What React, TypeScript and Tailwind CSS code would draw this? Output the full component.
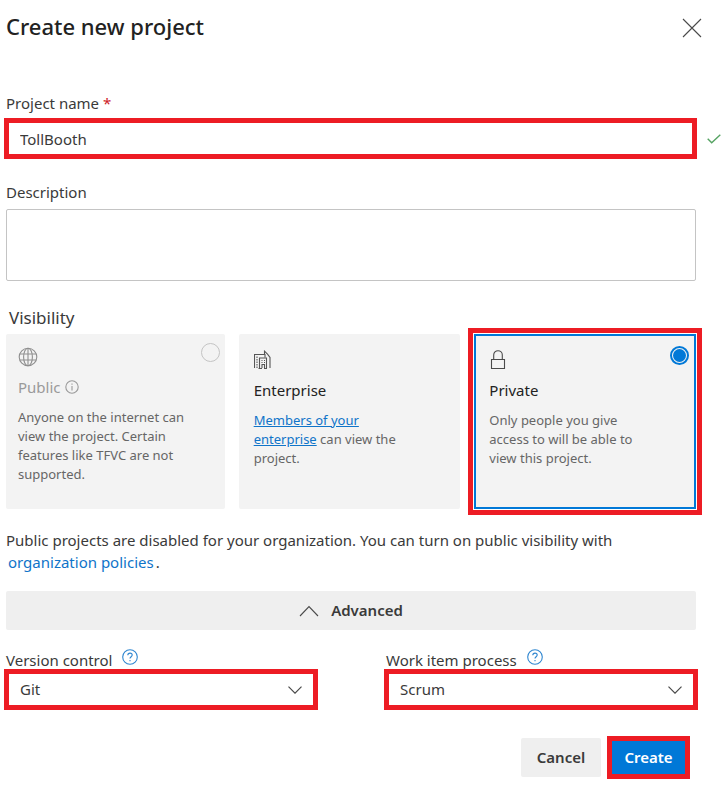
import { useState } from "react";
import type { ReactNode } from "react";

function CloseIcon() {
  return (
    <svg width="20" height="20" viewBox="0 0 20 20" fill="none" stroke="#4a4a4a" strokeWidth="1.1" aria-hidden="true">
      <path d="M1 1l18 18M19 1L1 19" />
    </svg>
  );
}

function CheckIcon() {
  return (
    <svg width="14" height="10" viewBox="0 0 14 10" fill="none" stroke="#55a362" strokeWidth="1.4" aria-hidden="true">
      <path d="M.7 4.7l4 4L13.3.8" />
    </svg>
  );
}

function GlobeIcon() {
  return (
    <svg width="20" height="20" viewBox="0 0 20 20" fill="none" stroke="#8f8f8f" strokeWidth="1.1" aria-hidden="true">
      <circle cx="10" cy="10" r="8.8" />
      <ellipse cx="10" cy="10" rx="4.4" ry="8.8" />
      <path d="M10 1.2v17.6M2 7h16M2 13h16" />
    </svg>
  );
}

function BuildingIcon() {
  return (
    <svg width="18" height="20" viewBox="1 0 18 20" fill="none" stroke="#555555" strokeWidth="1.1" aria-hidden="true">
      <path d="M1.500 18V4.500h10.500v3" />
      <path d="M11.500 4V1.200l3 3 2.500 3.300V18" />
      <path d="M6.500 18V8h7v10M9 18v-3.500h2.500V18" />
      <path d="M4 6.500V18" strokeDasharray="1.500 1" />
      <path d="M8.500 10.500h1M11 10.500h1M8.500 12.500h1M11 12.500h1" />
      <path d="M5.500 18.500h3.500M11 18.500h3" />
    </svg>
  );
}

function LockIcon() {
  return (
    <svg width="18" height="20" viewBox="-1 0 18 20" fill="none" stroke="#4a4a4a" strokeWidth="1.1" aria-hidden="true">
      <path d="M1.500 9.500h13v9H1.500z" />
      <path d="M3.700 9.500V5a4.300 4.300 0 018.600 0v4.500" />
    </svg>
  );
}

function InfoIcon() {
  return (
    <svg width="14" height="14" viewBox="0 0 14 14" fill="none" stroke="#9a9a9a" strokeWidth="1.1" aria-hidden="true">
      <circle cx="7" cy="7" r="6.200" />
      <path d="M7 6v4.500M7 3.600v1.200" />
    </svg>
  );
}

function HelpIcon() {
  return (
    <svg width="16" height="16" viewBox="0 0 16 16" fill="none" stroke="#2f86d0" strokeWidth="1.1" aria-hidden="true">
      <circle cx="8" cy="8" r="7.300" />
      <path d="M5.800 6.200c0-1.300 1-2.100 2.200-2.100s2.200.8 2.200 2c0 1.600-2.200 1.700-2.200 3.500M8 10.900v1.300" />
    </svg>
  );
}

function ChevronIcon({ up = false }: { up?: boolean }) {
  return up ? (
    <svg width="20" height="12" viewBox="0 0 20 12" fill="none" stroke="#4a4a4a" strokeWidth="1.100" aria-hidden="true">
      <path d="M1 11l9-9.500L19 11" />
    </svg>
  ) : (
    <svg width="14" height="8" viewBox="0 0 14 8" fill="none" stroke="#4a4a4a" strokeWidth="1.200" aria-hidden="true">
      <path d="M.500.700L7 7.200l6.500-6.500" />
    </svg>
  );
}

type CardProps = {
  value: string;
  title: string;
  icon: ReactNode;
  children: ReactNode;
  selected: boolean;
  onSelect: (value: string) => void;
};

function VisibilityCard({ value, title, icon, children, selected, onSelect }: CardProps) {
  return (
    <div
      className={
        selected
          ? "flex border-2 border-[#0078d7] bg-[#f3f3f3] py-3.5 pr-[5px] pl-[13px] outline-[5px] outline-offset-1 outline-[#ed1c24]"
          : "flex rounded-xs border-2 border-[#f3f3f3] bg-[#f3f3f3] py-3.5 pr-[5px] pl-[13px]"
      }
    >
      <div className="flex-1">
        {icon}
        <label htmlFor={value} className="mt-2 block text-[15px] leading-6 text-[#222222]">
          {title}
        </label>
        <p className="mt-[9px] pr-5 text-[13px] leading-[19px] text-[#666666]">{children}</p>
      </div>
      <input
        id={value}
        type="radio"
        name="visibility"
        checked={selected}
        onChange={() => onSelect(value)}
        className={
          selected
            ? "-mt-1 size-[19px] appearance-none rounded-full border-2 border-[#0078d7] bg-[#0078d7] bg-clip-content p-px"
            : "size-[19px] appearance-none"
        }
      />
    </div>
  );
}

function SelectField({ id, label, options }: { id: string; label: string; options: string[] }) {
  return (
    <div>
      <div className="ml-0.5 flex h-5 gap-2.5">
        <label htmlFor={id} className="text-[15px] leading-[22px]">
          {label}
        </label>
        <button type="button" aria-label={`Help for ${label}`} className="h-4">
          <HelpIcon />
        </button>
      </div>
      <div className="grid items-center">
        <select
          id={id}
          className="col-start-1 row-start-1 h-[41px] w-full appearance-none border-[5px] border-[#ed1c24] bg-white pl-[11px] text-[15px]"
        >
          {options.map((option) => (
            <option key={option}>{option}</option>
          ))}
        </select>
        <span className="pointer-events-none col-start-1 row-start-1 mr-4 justify-self-end">
          <ChevronIcon />
        </span>
      </div>
    </div>
  );
}

export default function App() {
  const [name, setName] = useState("TollBooth");
  const [visibility, setVisibility] = useState("private");

  return (
    <form
      onSubmit={(event) => event.preventDefault()}
      className="bg-white pr-[30px] pb-2 pl-1 font-['Noto_Sans','Open_Sans',sans-serif] text-[15px] text-[#3a3a3a]"
    >
      <header className="-mr-[5px] ml-0.5 flex items-center justify-between pt-3">
        <h1 className="pb-1 text-[22px] leading-7 font-medium text-[#222222]">Create new project</h1>
        <button type="button" aria-label="Close">
          <CloseIcon />
        </button>
      </header>

      <label htmlFor="project-name" className="mt-[47px] ml-0.5 block leading-6">
        Project name <span className="text-[#cd2026]">*</span>
      </label>
      <div className="-mr-6 mt-[3px] flex items-center gap-2.5">
        <input
          id="project-name"
          value={name}
          onChange={(event) => setName(event.target.value)}
          className="h-[41px] min-w-0 flex-1 border-[5px] border-[#ed1c24] pl-[11px]"
        />
        <CheckIcon />
      </div>

      <label htmlFor="description" className="mt-[21px] ml-0.5 block leading-6">
        Description
      </label>
      <div className="mt-[5px] mr-px ml-0.5 flex">
        <textarea id="description" className="h-[72px] flex-1 resize-none rounded-xs border border-[#c4c4c4] p-2" />
      </div>

      <fieldset className="mt-[25px] mr-px ml-0.5">
        <legend className="pl-[3px] text-[17px] leading-6">Visibility</legend>
        <div className="mt-1 grid h-[175px] grid-cols-[219fr_222fr_222fr] gap-3.5">
          <div className="flex rounded-xs bg-[#f3f3f3] py-[13px] pr-[5px] pl-3">
            <div className="flex-1">
              <GlobeIcon />
              <div className="mt-2 flex items-center gap-1">
                <label htmlFor="public" className="leading-6 text-[#9a9a9a]">
                  Public
                </label>
                <InfoIcon />
              </div>
              <p className="mt-[9px] text-[13px] leading-[19px] text-[#666666]">
                Anyone on the internet can view the project. Certain features like TFVC are not supported.
              </p>
            </div>
            <input
              id="public"
              type="radio"
              name="visibility"
              disabled
              className="-mt-1 size-[19px] appearance-none rounded-full border border-[#c4c4c4]"
            />
          </div>
          <VisibilityCard
            value="enterprise"
            title="Enterprise"
            icon={<BuildingIcon />}
            selected={visibility === "enterprise"}
            onSelect={setVisibility}
          >
            <a href="#members" className="text-[#0f74c9] underline">
              Members of your enterprise
            </a>{" "}
            can view the project.
          </VisibilityCard>
          <VisibilityCard
            value="private"
            title="Private"
            icon={<LockIcon />}
            selected={visibility === "private"}
            onSelect={setVisibility}
          >
            Only people you give access to will be able to view this project.
          </VisibilityCard>
        </div>
      </fieldset>

      <p className="mt-5 ml-0.5 leading-[22px]">
        Public projects are disabled for your organization. You can turn on public visibility with{" "}
        <a href="#policies" className="px-0.5 text-[#0f74c9]">
          organization policies
        </a>
        .
      </p>

      <div className="mt-[18px] mr-px ml-0.5 flex">
        <button
          type="button"
          aria-expanded="true"
          className="flex h-[39px] flex-1 items-center justify-center gap-3 rounded-xs bg-[#efefef] font-semibold"
        >
          <ChevronIcon up />
          Advanced
        </button>
      </div>

      <div className="-mr-px mt-[19px] grid grid-cols-2 gap-[66px]">
        <SelectField id="version-control" label="Version control" options={["Git", "Team Foundation Version Control"]} />
        <SelectField id="work-item-process" label="Work item process" options={["Scrum", "Agile", "Basic", "CMMI"]} />
      </div>

      <footer className="mt-[26px] mr-[7px] flex items-center justify-end gap-1.5 font-semibold">
        <button type="button" className="h-[39px] w-20 rounded-xs bg-[#efefef]">
          Cancel
        </button>
        <button type="submit" className="h-[43px] w-[83px] border-[5px] border-[#ed1c24] bg-[#0078d7] text-white">
          Create
        </button>
      </footer>
    </form>
  );
}
